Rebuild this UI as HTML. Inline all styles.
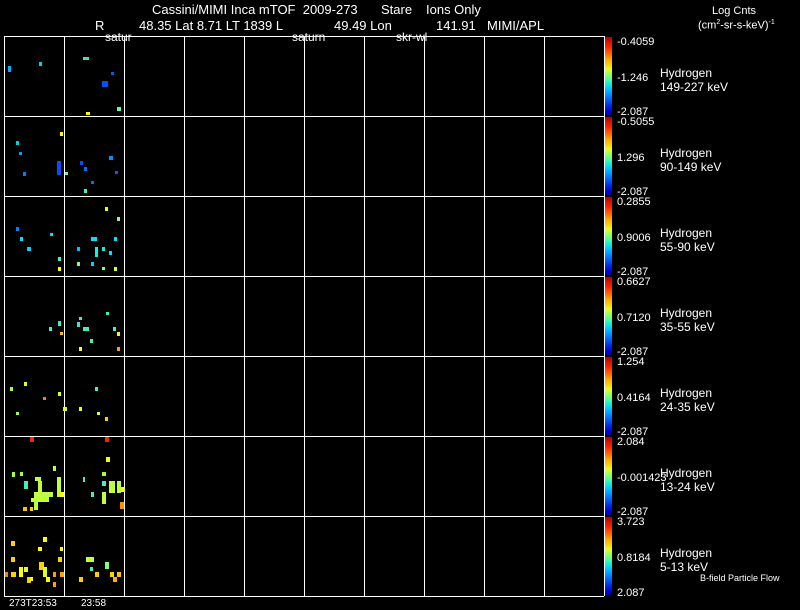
<!DOCTYPE html>
<html><head><meta charset="utf-8"><style>
html,body{margin:0;padding:0;background:#000;}
body{width:800px;height:609px;overflow:hidden;position:relative;font-family:"Liberation Sans",sans-serif;color:#fff;font-size:11px;}
.t{position:absolute;white-space:pre;line-height:12px;}
.h{font-size:13px;line-height:14px;}
.l{font-size:12px;line-height:14px;}
</style></head><body>
<svg width="800" height="609" style="position:absolute;left:0;top:0">
<defs><linearGradient id="jet" x1="0" y1="0" x2="0" y2="1">
<stop offset="0" stop-color="#b00000"/><stop offset="0.12" stop-color="#ff2000"/><stop offset="0.3" stop-color="#ffb000"/><stop offset="0.42" stop-color="#e0ff20"/><stop offset="0.55" stop-color="#40ffb0"/><stop offset="0.65" stop-color="#00d0ff"/><stop offset="0.8" stop-color="#0060ff"/><stop offset="0.95" stop-color="#0000d0"/><stop offset="1" stop-color="#000090"/></linearGradient></defs>
<g stroke="#fff" stroke-width="1" fill="none">
<path d="M4.5 36V596M64.5 36V596M124.5 36V596M184.5 36V596M244.5 36V596M304.5 36V596M364.5 36V596M424.5 36V596M484.5 36V596M544.5 36V596M604.5 36V596"/>
<path d="M4 36.5H604M4 116.5H604M4 196.5H604M4 276.5H604M4 356.5H604M4 436.5H604M4 516.5H604M4 596.5H604"/>
</g>
<g fill="url(#jet)">
<rect x="605" y="37" width="7" height="78"/><rect x="605" y="117" width="7" height="78"/><rect x="605" y="197" width="7" height="78"/><rect x="605" y="277" width="7" height="78"/><rect x="605" y="357" width="7" height="78"/><rect x="605" y="437" width="7" height="78"/><rect x="605" y="517" width="7" height="78"/>
</g>
<g>
<rect x="8" y="66" width="3" height="6" fill="#00b0ff"/><rect x="39" y="62" width="3" height="4" fill="#00d0ff"/><rect x="83" y="57" width="6" height="3" fill="#40e0c0"/><rect x="111" y="72" width="3" height="3" fill="#0060ff"/><rect x="102" y="81" width="6" height="6" fill="#0050ff"/><rect x="86" y="112" width="4" height="3" fill="#ffff00"/><rect x="117" y="107" width="4" height="4" fill="#60ffa0"/>
<rect x="16" y="141" width="3" height="4" fill="#00d0e0"/><rect x="19" y="152" width="3" height="3" fill="#00a0ff"/><rect x="23" y="172" width="3" height="4" fill="#0080ff"/><rect x="57" y="161" width="4" height="14" fill="#0050ff"/><rect x="60" y="132" width="3" height="4" fill="#ffff00"/><rect x="80" y="161" width="3" height="4" fill="#0050ff"/><rect x="84" y="167" width="3" height="4" fill="#0070ff"/><rect x="91" y="181" width="3" height="3" fill="#0070ff"/><rect x="84" y="189" width="3" height="4" fill="#40f0c0"/><rect x="109" y="156" width="4" height="4" fill="#0090ff"/><rect x="115" y="171" width="3" height="3" fill="#0060ff"/><rect x="65" y="172" width="3" height="3" fill="#60ffa0"/>
<rect x="16" y="227" width="3" height="4" fill="#0080ff"/><rect x="20" y="237" width="3" height="4" fill="#00e0ff"/><rect x="27" y="247" width="4" height="4" fill="#00d0ff"/><rect x="50" y="233" width="3" height="3" fill="#00e0ff"/><rect x="58" y="257" width="3" height="4" fill="#40f0c0"/><rect x="58" y="267" width="3" height="4" fill="#ffff00"/><rect x="105" y="207" width="3" height="4" fill="#e0ff20"/><rect x="117" y="217" width="3" height="4" fill="#80ffa0"/><rect x="91" y="237" width="6" height="4" fill="#00e0ff"/><rect x="114" y="237" width="3" height="4" fill="#00e0ff"/><rect x="77" y="247" width="3" height="4" fill="#00c0ff"/><rect x="95" y="247" width="3" height="10" fill="#00ffe0"/><rect x="102" y="247" width="3" height="4" fill="#00f0e0"/><rect x="109" y="251" width="3" height="4" fill="#00e0ff"/><rect x="77" y="262" width="3" height="4" fill="#80ff80"/><rect x="91" y="262" width="3" height="4" fill="#00d0ff"/><rect x="102" y="267" width="3" height="3" fill="#80ff80"/><rect x="114" y="267" width="3" height="4" fill="#e0ff20"/>
<rect x="58" y="321" width="3" height="5" fill="#40f0c0"/><rect x="49" y="327" width="3" height="4" fill="#40f0c0"/><rect x="60" y="332" width="3" height="3" fill="#ffc000"/><rect x="77" y="322" width="3" height="5" fill="#40e0e0"/><rect x="83" y="327" width="6" height="4" fill="#40f0c0"/><rect x="79" y="317" width="3" height="3" fill="#40f0c0"/><rect x="113" y="327" width="3" height="4" fill="#40f0c0"/><rect x="117" y="332" width="3" height="4" fill="#e0ff20"/><rect x="79" y="347" width="3" height="4" fill="#ffff00"/><rect x="117" y="347" width="3" height="4" fill="#ffa000"/><rect x="90" y="339" width="3" height="4" fill="#40f0c0"/><rect x="106" y="312" width="3" height="3" fill="#40f0c0"/>
<rect x="10" y="387" width="3" height="4" fill="#a0ff40"/><rect x="24" y="382" width="3" height="4" fill="#e0ff20"/><rect x="43" y="397" width="3" height="3" fill="#ff8000"/><rect x="58" y="392" width="3" height="4" fill="#e0ff20"/><rect x="63" y="407" width="4" height="4" fill="#e0ff20"/><rect x="79" y="407" width="3" height="4" fill="#e0ff20"/><rect x="95" y="387" width="3" height="4" fill="#40f0c0"/><rect x="97" y="412" width="3" height="3" fill="#e0ff20"/><rect x="105" y="417" width="3" height="4" fill="#ffd000"/><rect x="16" y="412" width="3" height="3" fill="#a0ff40"/>
<rect x="30" y="437" width="4" height="5" fill="#ff2000"/><rect x="105" y="437" width="4" height="5" fill="#ff2000"/>
<rect x="12" y="472" width="3" height="5" fill="#a0ff40"/><rect x="20" y="472" width="3" height="4" fill="#a0ff40"/><rect x="24" y="481" width="4" height="8" fill="#40f0c0"/><rect x="35" y="477" width="6" height="4" fill="#c0ff40"/><rect x="38" y="481" width="4" height="18" fill="#c0ff40"/><rect x="34" y="492" width="15" height="8" fill="#c0ff40"/><rect x="31" y="498" width="18" height="4" fill="#c0ff40"/><rect x="49" y="492" width="4" height="5" fill="#c0ff40"/><rect x="57" y="477" width="4" height="20" fill="#c0ff40"/><rect x="60" y="492" width="4" height="5" fill="#ffff00"/><rect x="53" y="466" width="3" height="5" fill="#c0ff40"/><rect x="23" y="507" width="4" height="4" fill="#ffc000"/><rect x="30" y="507" width="3" height="4" fill="#ffd000"/><rect x="34" y="502" width="4" height="8" fill="#c0ff40"/>
<rect x="106" y="457" width="4" height="5" fill="#ffff00"/><rect x="102" y="472" width="4" height="4" fill="#a0ff40"/><rect x="102" y="481" width="4" height="5" fill="#40f0c0"/><rect x="109" y="481" width="6" height="12" fill="#c0ff40"/><rect x="117" y="481" width="4" height="12" fill="#c0ff40"/><rect x="121" y="487" width="4" height="5" fill="#ffff00"/><rect x="102" y="492" width="4" height="12" fill="#c0ff40"/><rect x="120" y="502" width="4" height="7" fill="#ff9000"/><rect x="91" y="492" width="3" height="5" fill="#40f0c0"/><rect x="83" y="477" width="2" height="5" fill="#40f0c0"/>
<rect x="11" y="541" width="4" height="5" fill="#ffd000"/><rect x="43" y="537" width="4" height="5" fill="#ffff00"/><rect x="38" y="547" width="4" height="4" fill="#ffff00"/><rect x="11" y="557" width="4" height="5" fill="#ffd000"/><rect x="24" y="567" width="4" height="5" fill="#e0ff20"/><rect x="19" y="567" width="4" height="10" fill="#ffff00"/><rect x="11" y="572" width="5" height="5" fill="#ffd000"/><rect x="5" y="572" width="3" height="5" fill="#ff8000"/><rect x="27" y="577" width="4" height="6" fill="#ffd000"/><rect x="30" y="577" width="3" height="4" fill="#ffff00"/><rect x="39" y="562" width="5" height="8" fill="#ffd000"/><rect x="43" y="567" width="4" height="10" fill="#e0ff20"/><rect x="46" y="577" width="4" height="5" fill="#ffff00"/><rect x="53" y="572" width="3" height="5" fill="#ffa000"/><rect x="53" y="582" width="3" height="5" fill="#ffa000"/><rect x="58" y="557" width="4" height="5" fill="#ffd000"/><rect x="60" y="572" width="4" height="5" fill="#ffa000"/><rect x="60" y="547" width="3" height="4" fill="#ffff00"/>
<rect x="86" y="557" width="8" height="5" fill="#c0ff40"/><rect x="90" y="567" width="3" height="4" fill="#40f0c0"/><rect x="95" y="572" width="4" height="5" fill="#ffd000"/><rect x="79" y="577" width="4" height="5" fill="#ffd000"/><rect x="105" y="562" width="4" height="7" fill="#80ff80"/><rect x="110" y="572" width="4" height="5" fill="#ffd000"/><rect x="117" y="572" width="4" height="5" fill="#ffc000"/><rect x="113" y="577" width="4" height="5" fill="#ffb000"/>
</g>
</svg>
<div class="t h" style="left:152px;top:3px">Cassini/MIMI Inca mTOF  2009-273</div>
<div class="t h" style="left:381px;top:3px">Stare</div>
<div class="t h" style="left:426px;top:3px">Ions Only</div>
<div class="t h" style="left:95px;top:19px">R</div>
<div class="t h" style="left:139px;top:19px">48.35 Lat 8.71 LT 1839 L</div>
<div class="t h" style="left:334px;top:19px">49.49 Lon</div>
<div class="t h" style="left:436px;top:19px">141.91</div>
<div class="t h" style="left:487px;top:19px">MIMI/APL</div>
<div class="t l" style="left:105px;top:30px">satur</div>
<div class="t l" style="left:292px;top:30px">saturn</div>
<div class="t l" style="left:396px;top:30px">skr-wl</div>
<div class="t" style="left:712px;top:5px">Log Cnts</div>
<div class="t" style="left:698px;top:17px">(cm<sup style="font-size:7px">2</sup>-sr-s-keV)<sup style="font-size:7px">-1</sup></div>
<div class="t" style="left:617px;top:36px">-0.4059</div><div class="t" style="left:617px;top:72px">-1.246</div><div class="t" style="left:617px;top:106px">-2.087</div>
<div class="t" style="left:617px;top:116px">-0.5055</div><div class="t" style="left:617px;top:152px">1.296</div><div class="t" style="left:617px;top:186px">-2.087</div>
<div class="t" style="left:617px;top:196px">0.2855</div><div class="t" style="left:617px;top:232px">0.9006</div><div class="t" style="left:617px;top:266px">-2.087</div>
<div class="t" style="left:617px;top:276px">0.6627</div><div class="t" style="left:617px;top:312px">0.7120</div><div class="t" style="left:617px;top:346px">-2.087</div>
<div class="t" style="left:617px;top:356px">1.254</div><div class="t" style="left:617px;top:392px">0.4164</div><div class="t" style="left:617px;top:426px">-2.087</div>
<div class="t" style="left:617px;top:436px">2.084</div><div class="t" style="left:617px;top:472px">-0.001423</div><div class="t" style="left:617px;top:506px">-2.087</div>
<div class="t" style="left:617px;top:516px">3.723</div><div class="t" style="left:617px;top:552px">0.8184</div><div class="t" style="left:617px;top:587px">2.087</div>
<div class="t l" style="left:660px;top:66px">Hydrogen<br>149-227 keV</div>
<div class="t l" style="left:660px;top:146px">Hydrogen<br>90-149 keV</div>
<div class="t l" style="left:660px;top:226px">Hydrogen<br>55-90 keV</div>
<div class="t l" style="left:660px;top:306px">Hydrogen<br>35-55 keV</div>
<div class="t l" style="left:660px;top:386px">Hydrogen<br>24-35 keV</div>
<div class="t l" style="left:660px;top:466px">Hydrogen<br>13-24 keV</div>
<div class="t l" style="left:660px;top:546px">Hydrogen<br>5-13 keV</div>
<div class="t" style="left:700px;top:572px;font-size:9px">B-field Particle Flow</div>
<div class="t" style="left:9px;top:598px;font-size:10px">273T23:53</div>
<div class="t" style="left:81px;top:598px;font-size:10px">23:58</div>
</body></html>
